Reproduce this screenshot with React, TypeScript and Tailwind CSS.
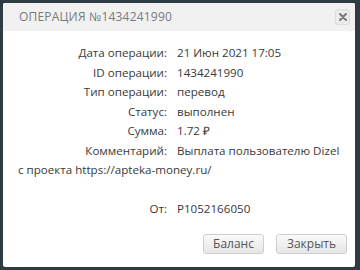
import React from 'react';

const rows: { label: string; value: string }[] = [
  { label: 'Дата операции:', value: '21 Июн 2021 17:05' },
  { label: 'ID операции:', value: '1434241990' },
  { label: 'Тип операции:', value: 'перевод' },
  { label: 'Статус:', value: 'выполнен' },
  { label: 'Сумма:', value: '1.72 ₽' },
  { label: 'Комментарий:', value: 'Выплата пользователю Dizel с проекта https://apteka-money.ru/' },
];

const Row = ({ label, value }: { label: string; value: string }) => (
  <div className="leading-[19.5px]">
    <span className="inline-block w-[149px] text-right">{label}</span>
    <span className="ml-[10px]">{value}</span>
  </div>
);

const App = () => {
  return (
    <div
      className="w-[360px] h-[270px] bg-[#2d3b42] pt-[3px] pl-[3px]"
      style={{ fontFamily: '"Open Sans", "Liberation Sans", sans-serif' }}
    >
      <div className="w-[352px] h-[264px] bg-white rounded-[2px] overflow-hidden flex flex-col">
        {/* header */}
        <div className="h-[28px] bg-[#f1f1f1] flex items-center justify-between pl-[16px] pr-[5px]">
          <span className="text-[12px] tracking-[0.2px] text-[#7a7a7a] uppercase">Операция №1434241990</span>
          <button className="w-[15px] h-[16px] rounded-[3px] border border-[#dcdcdc] bg-[#ececec] flex items-center justify-center">
            <svg width="8" height="8" viewBox="0 0 8 8">
              <path d="M1 1 L7 7 M7 1 L1 7" stroke="#777" strokeWidth="2" strokeLinecap="round" />
            </svg>
          </button>
        </div>

        {/* body */}
        <div className="pt-[12px] pl-[15px] pr-[12px] text-[11.6px] text-[#3a3a3a]">
          {rows.map(r => (
            <Row key={r.label} label={r.label} value={r.value} />
          ))}
          <div className="h-[19.5px]" />
          <Row label="От:" value="P1052166050" />
        </div>

        {/* footer */}
        <div className="mt-auto flex justify-end gap-[12px] pr-[8px] pb-[13px]">
          <button className="w-[61px] h-[20px] rounded-[3px] border border-[#cfcfcf] bg-gradient-to-b from-[#fafafa] to-[#e6e6e6] text-[12px] text-[#555]">
            Баланс
          </button>
          <button className="w-[71px] h-[20px] rounded-[3px] border border-[#cfcfcf] bg-gradient-to-b from-[#fafafa] to-[#e6e6e6] text-[12px] text-[#555]">
            Закрыть
          </button>
        </div>
      </div>
    </div>
  );
};

export default App;
